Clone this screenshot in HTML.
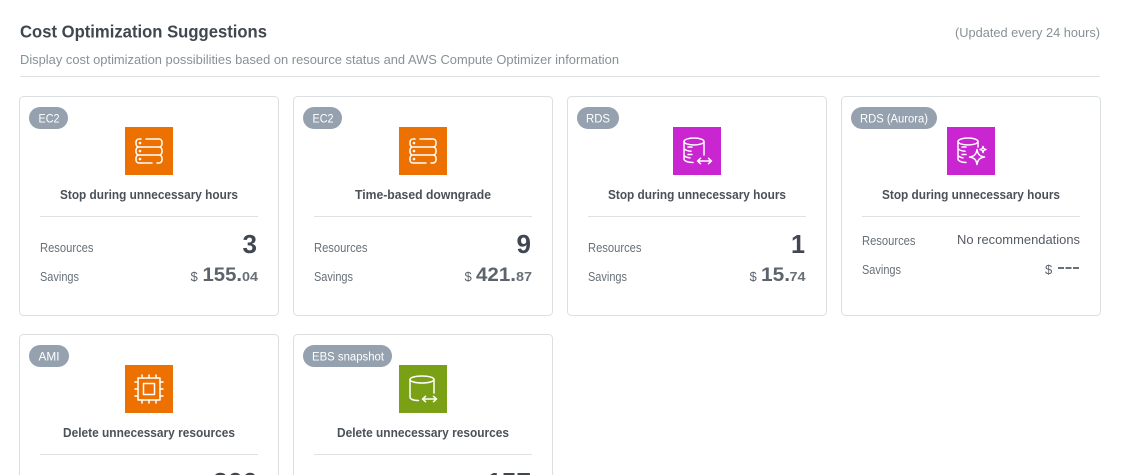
<!DOCTYPE html>
<html><head><meta charset="utf-8"><style>
html,body{margin:0;padding:0;background:#fff;width:1123px;height:475px;overflow:hidden}
svg{display:block;font-family:"Liberation Sans",sans-serif}
.card{fill:#fff;stroke:#dcdfe1;stroke-width:1}
.line{stroke:#dfe2e4;stroke-width:1}
.pill{fill:#95a1af}
.pt{fill:#fff;font-size:11.5px}
.ct{fill:#4b5159;font-size:13px;font-weight:700}
.lb{fill:#687078;font-size:12.5px}
.num{fill:#414750;font-size:26px;font-weight:700}
.sv{fill:#5c636c;font-size:19.5px;font-weight:700}
.cn{fill:#687078;font-size:13px;font-weight:700}
.dl{fill:#5c636c;font-size:13px}
.ic{fill:none;stroke:#fff;stroke-width:1.5;stroke-linecap:round;stroke-linejoin:round}
.d{fill:#fff}
</style></head><body>
<svg width="1123" height="475" viewBox="0 0 1123 475" xmlns="http://www.w3.org/2000/svg">
<text x="20" y="37.5" font-size="17.5" font-weight="700" fill="#414750" textLength="247" lengthAdjust="spacingAndGlyphs">Cost Optimization Suggestions</text>
<text x="955" y="37" font-size="12.5" fill="#879196" textLength="145" lengthAdjust="spacingAndGlyphs">(Updated every 24 hours)</text>
<text x="20" y="64" font-size="13" fill="#879196" textLength="599" lengthAdjust="spacingAndGlyphs">Display cost optimization possibilities based on resource status and AWS Compute Optimizer information</text>
<line class="line" x1="20" y1="76.5" x2="1100" y2="76.5"/>

<!-- Card 1 -->
<rect class="card" x="19.5" y="96.5" width="259" height="219" rx="4"/>
<rect class="pill" x="29" y="107" width="39" height="22" rx="11"/>
<text class="pt" x="38.5" y="122.5" textLength="21" lengthAdjust="spacingAndGlyphs">EC2</text>
<g transform="translate(125 127)"><rect width="48" height="48" fill="#ed7100"/>
<path class="ic" d="M16 12H14a3 3 0 0 0-3 3v2a3 3 0 0 0 3 3H34a3 3 0 0 0 3-3v-2a3 3 0 0 0-3-3H21M14 20a3 3 0 0 0-3 3v2a3 3 0 0 0 3 3H34a3 3 0 0 0 3-3v-2a3 3 0 0 0-3-3M14 28a3 3 0 0 0-3 3v2a3 3 0 0 0 3 3H27M32 36H34a3 3 0 0 0 3-3v-2a3 3 0 0 0-3-3"/>
<circle class="d" cx="15" cy="16" r="1.3"/><circle class="d" cx="15" cy="24" r="1.3"/><circle class="d" cx="15" cy="32" r="1.3"/></g>
<text class="ct" x="60" y="199" textLength="178" lengthAdjust="spacingAndGlyphs">Stop during unnecessary hours</text>
<line class="line" x1="40" y1="216.5" x2="258" y2="216.5"/>
<text class="lb" x="40" y="252" textLength="53.5" lengthAdjust="spacingAndGlyphs">Resources</text>
<text class="lb" x="40" y="281" textLength="39" lengthAdjust="spacingAndGlyphs">Savings</text>
<text class="num" x="242.5" y="253" textLength="14.5" lengthAdjust="spacingAndGlyphs">3</text>
<text class="dl" x="190.5" y="281">$</text>
<text class="sv" x="202.5" y="281" textLength="39.5" lengthAdjust="spacingAndGlyphs">155.</text>
<text class="cn" x="242" y="281" textLength="16" lengthAdjust="spacingAndGlyphs">04</text>

<!-- Card 2 -->
<rect class="card" x="293.5" y="96.5" width="259" height="219" rx="4"/>
<rect class="pill" x="303" y="107" width="39" height="22" rx="11"/>
<text class="pt" x="312.5" y="122.5" textLength="21" lengthAdjust="spacingAndGlyphs">EC2</text>
<g transform="translate(399 127)"><rect width="48" height="48" fill="#ed7100"/>
<path class="ic" d="M16 12H14a3 3 0 0 0-3 3v2a3 3 0 0 0 3 3H34a3 3 0 0 0 3-3v-2a3 3 0 0 0-3-3H21M14 20a3 3 0 0 0-3 3v2a3 3 0 0 0 3 3H34a3 3 0 0 0 3-3v-2a3 3 0 0 0-3-3M14 28a3 3 0 0 0-3 3v2a3 3 0 0 0 3 3H27M32 36H34a3 3 0 0 0 3-3v-2a3 3 0 0 0-3-3"/>
<circle class="d" cx="15" cy="16" r="1.3"/><circle class="d" cx="15" cy="24" r="1.3"/><circle class="d" cx="15" cy="32" r="1.3"/></g>
<text class="ct" x="355" y="199" textLength="136" lengthAdjust="spacingAndGlyphs">Time-based downgrade</text>
<line class="line" x1="314" y1="216.5" x2="532" y2="216.5"/>
<text class="lb" x="314" y="252" textLength="53.5" lengthAdjust="spacingAndGlyphs">Resources</text>
<text class="lb" x="314" y="281" textLength="39" lengthAdjust="spacingAndGlyphs">Savings</text>
<text class="num" x="516.5" y="253" textLength="14.5" lengthAdjust="spacingAndGlyphs">9</text>
<text class="dl" x="464.5" y="281">$</text>
<text class="sv" x="476" y="281" textLength="40" lengthAdjust="spacingAndGlyphs">421.</text>
<text class="cn" x="516" y="281" textLength="16" lengthAdjust="spacingAndGlyphs">87</text>

<!-- Card 3 -->
<rect class="card" x="567.5" y="96.5" width="259" height="219" rx="4"/>
<rect class="pill" x="577" y="107" width="42" height="22" rx="11"/>
<text class="pt" x="586" y="122.5" textLength="24" lengthAdjust="spacingAndGlyphs">RDS</text>
<g transform="translate(673 127)"><rect width="48" height="48" fill="#c925d1"/>
<ellipse class="ic" cx="21" cy="14.5" rx="10" ry="3.5"/>
<path class="ic" d="M11 14.5V32c0 2 4 3.5 9 3.5M31 14.5V28M11 21.500c1 1.500 4 2.500 7 2.800M11 28.500c1 1.200 3 2 6 2.400M15 20h4M15 27.500h4M25 34h13M27.500 31.300L24.500 34l3 2.700M35.500 31.300l3 2.700-3 2.700"/></g>
<text class="ct" x="608" y="199" textLength="178" lengthAdjust="spacingAndGlyphs">Stop during unnecessary hours</text>
<line class="line" x1="588" y1="216.5" x2="806" y2="216.5"/>
<text class="lb" x="588" y="252" textLength="53.5" lengthAdjust="spacingAndGlyphs">Resources</text>
<text class="lb" x="588" y="281" textLength="39" lengthAdjust="spacingAndGlyphs">Savings</text>
<text class="num" x="791" y="253" textLength="14" lengthAdjust="spacingAndGlyphs">1</text>
<text class="dl" x="749.5" y="281">$</text>
<text class="sv" x="761" y="281" textLength="29" lengthAdjust="spacingAndGlyphs">15.</text>
<text class="cn" x="789.5" y="281" textLength="16" lengthAdjust="spacingAndGlyphs">74</text>

<!-- Card 4 -->
<rect class="card" x="841.5" y="96.5" width="259" height="219" rx="4"/>
<rect class="pill" x="851" y="107" width="86" height="22" rx="11"/>
<text class="pt" x="860" y="122.5" textLength="68" lengthAdjust="spacingAndGlyphs">RDS (Aurora)</text>
<g transform="translate(947 127)"><rect width="48" height="48" fill="#c925d1"/>
<ellipse class="ic" cx="21" cy="14.5" rx="10" ry="3.5"/>
<path class="ic" d="M11 14.5V32c0 2 4 3.500 8 3.500M31 14.500V20M11 21.500c1 1.500 4 2.500 7 2.800M11 28.500c1 1.200 3 2 5 2.400M15 20h4M15 27.500h4M30 22.500c.8 4.700 2.500 6.700 7.500 7.500c-5 .8-6.700 2.800-7.500 7.500c-.8-4.700-2.500-6.700-7.500-7.500c5-.8 6.700-2.800 7.500-7.500ZM36 19.500c.3 2 1 2.700 3 3c-2 .3-2.700 1-3 3c-.3-2-1-2.700-3-3c2-.3 2.700-1 3-3Z"/></g>
<text class="ct" x="882" y="199" textLength="178" lengthAdjust="spacingAndGlyphs">Stop during unnecessary hours</text>
<line class="line" x1="862" y1="216.5" x2="1080" y2="216.5"/>
<text class="lb" x="862" y="245" textLength="53.5" lengthAdjust="spacingAndGlyphs">Resources</text>
<text class="lb" x="862" y="274" textLength="39" lengthAdjust="spacingAndGlyphs">Savings</text>
<text x="957" y="244" font-size="13" fill="#545b64" textLength="123" lengthAdjust="spacingAndGlyphs">No recommendations</text>
<text class="dl" x="1045" y="274">$</text>
<rect x="1058" y="267" width="6" height="2" fill="#687078"/><rect x="1065.500" y="267" width="6" height="2" fill="#687078"/><rect x="1073" y="267" width="6" height="2" fill="#687078"/>

<!-- Card 5 -->
<path class="card" d="M19.5 476V338.500a4 4 0 0 1 4-4H274.500a4 4 0 0 1 4 4V476"/>
<rect class="pill" x="29" y="345" width="40" height="22" rx="11"/>
<text class="pt" x="38.5" y="360.5" textLength="21" lengthAdjust="spacingAndGlyphs">AMI</text>
<g transform="translate(125 365)"><rect width="48" height="48" fill="#ed7100"/>
<rect class="ic" x="13" y="13" width="22" height="22"/>
<rect class="ic" x="18.500" y="18.500" width="11" height="11"/>
<path class="ic" d="M17 13V10M24 13V10M31 13V10M17 35v3M24 35v3M31 35v3M13 17H10M13 24H10M13 31H10M35 17h3M35 24h3M35 31h3"/></g>
<text class="ct" x="63" y="437" textLength="172" lengthAdjust="spacingAndGlyphs">Delete unnecessary resources</text>
<line class="line" x1="40" y1="454.5" x2="258" y2="454.5"/>
<text class="num" x="213" y="491" textLength="44" lengthAdjust="spacingAndGlyphs">266</text>

<!-- Card 6 -->
<path class="card" d="M293.500 476V338.500a4 4 0 0 1 4-4H548.500a4 4 0 0 1 4 4V476"/>
<rect class="pill" x="303" y="345" width="89" height="22" rx="11"/>
<text class="pt" x="312" y="360.5" textLength="72" lengthAdjust="spacingAndGlyphs">EBS snapshot</text>
<g transform="translate(399 365)"><rect width="48" height="48" fill="#7aa116"/>
<ellipse class="ic" cx="23" cy="14.500" rx="12" ry="3.500"/>
<path class="ic" d="M11 14.500V32c0 2 3 3.500 8.500 3.500M35 14.500V28M24 34h13M26.500 31.300L23.500 34l3 2.700M34.500 31.300l3 2.700-3 2.700"/></g>
<text class="ct" x="337" y="437" textLength="172" lengthAdjust="spacingAndGlyphs">Delete unnecessary resources</text>
<line class="line" x1="314" y1="454.5" x2="532" y2="454.5"/>
<text class="num" x="487" y="491" textLength="44" lengthAdjust="spacingAndGlyphs">157</text>
</svg>
</body></html>
